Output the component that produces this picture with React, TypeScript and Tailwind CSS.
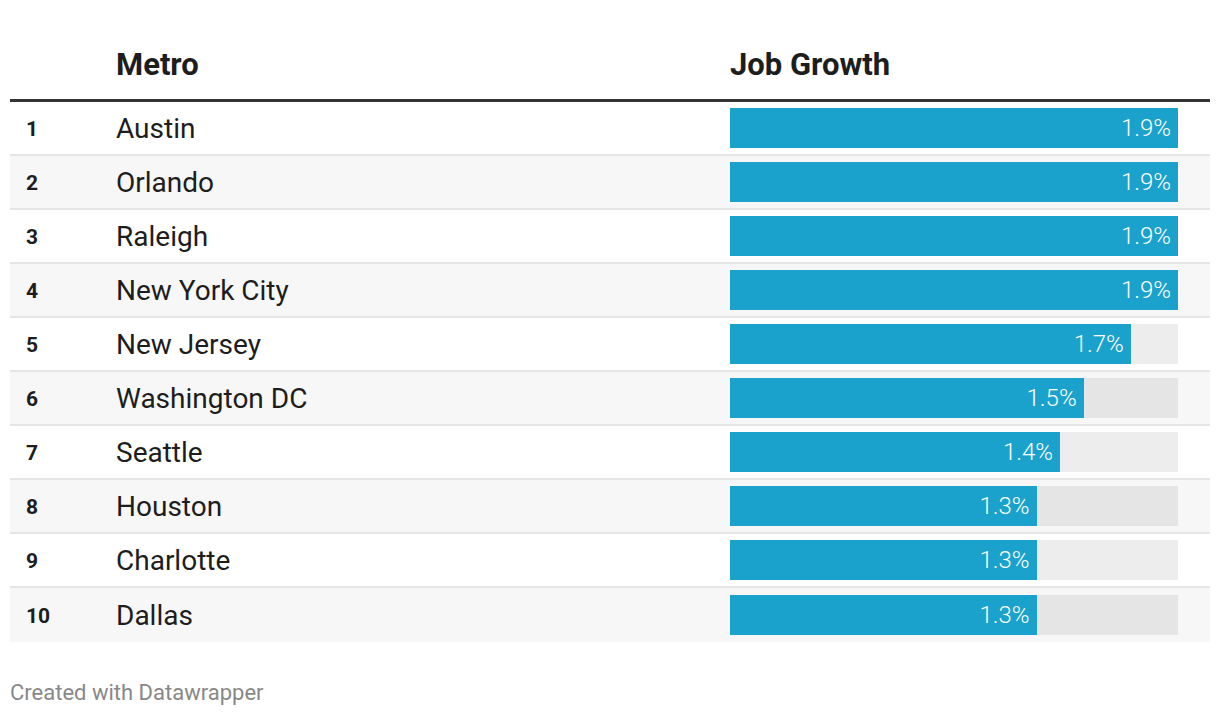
const rows = [
  { rank: 1, metro: "Austin", value: 1.9 },
  { rank: 2, metro: "Orlando", value: 1.9 },
  { rank: 3, metro: "Raleigh", value: 1.9 },
  { rank: 4, metro: "New York City", value: 1.9 },
  { rank: 5, metro: "New Jersey", value: 1.7 },
  { rank: 6, metro: "Washington DC", value: 1.5 },
  { rank: 7, metro: "Seattle", value: 1.4 },
  { rank: 8, metro: "Houston", value: 1.3 },
  { rank: 9, metro: "Charlotte", value: 1.3 },
  { rank: 10, metro: "Dallas", value: 1.3 },
];

const MAX = 1.9;

export default function App() {
  return (
    <div className="w-[1220px] h-[716px] bg-white px-[10px] text-[#1d1d1d] font-['Roboto',sans-serif]">
      {/* HEADER */}
      <div className="grid grid-cols-[106px_614px_1fr] h-[102px] border-b-[3px] border-[#333333] items-end pb-[19px]">
        <div />
        <div className="text-[31px] font-bold leading-none">Metro</div>
        <div className="text-[31px] font-bold leading-none">Job Growth</div>
      </div>

      {/* ROWS */}
      {rows.map((row, i) => (
        <div
          key={row.rank}
          className={`grid grid-cols-[106px_614px_1fr] h-[54px] items-center ${
            i < rows.length - 1 ? "border-b-2 border-[#e6e6e6]" : ""
          } ${i % 2 === 1 ? "bg-[#f7f7f7]" : "bg-white"}`}
        >
          <div className="pl-[16px] pt-[4px] text-[21px] font-bold">{row.rank}</div>
          <div className="pt-[2px] text-[28px]">{row.metro}</div>
          <div className="pr-[32px]">
            <div className="h-[40px] bg-[rgba(0,0,0,0.07)]">
              <div
                className="h-full bg-[#1aa2cd] flex items-center justify-end pr-[7px] text-white text-[24px] font-light"
                style={{ width: `${(row.value / MAX) * 100}%` }}
              >
                {row.value.toFixed(1)}%
              </div>
            </div>
          </div>
        </div>
      ))}

      {/* FOOTER */}
      <div className="pt-[34px] text-[22px] text-[#888888]">Created with Datawrapper</div>
    </div>
  );
}
